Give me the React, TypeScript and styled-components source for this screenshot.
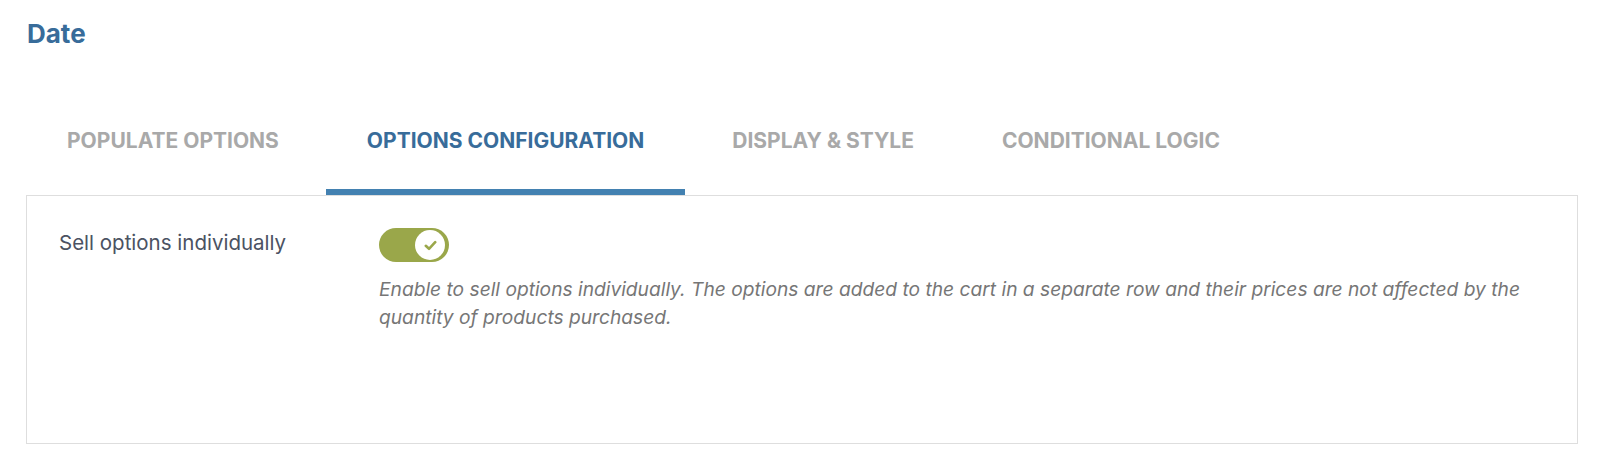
import React, { useState } from "react";
import styled, { createGlobalStyle } from "styled-components";

const GlobalStyle = createGlobalStyle`
  body {
    margin: 0;
    background-color: #ffffff;
    font-family: Inter, "Noto Sans", "Liberation Sans", sans-serif;
  }
`;

const Page = styled.div`
  padding: 18px 22px 0 26px;
`;

const Title = styled.h2`
  margin: 0;
  padding-left: 1px;
  font-size: 26px;
  line-height: 32px;
  font-weight: 700;
  color: #386c9a;
`;

const TabList = styled.div`
  display: flex;
  gap: 6px;
  margin-top: 79px;
`;

const Tab = styled.button<{ active: boolean }>`
  padding: 0 41px 36px;
  border: none;
  border-bottom: 6px solid ${(props) => (props.active ? "#4381b1" : "transparent")};
  background: none;
  font-family: inherit;
  font-size: 21px;
  line-height: 24px;
  font-weight: 700;
  text-transform: uppercase;
  color: ${(props) => (props.active ? "#386c9a" : "#a9a9a9")};
  cursor: pointer;
`;

const Panel = styled.div`
  display: flex;
  height: 249px;
  box-sizing: border-box;
  padding: 32px 32px;
  border: 1px solid #dedede;
`;

const Label = styled.div`
  width: 320px;
  flex-shrink: 0;
  margin-top: 2px;
  font-size: 20.5px;
  line-height: 25px;
  color: #4b5262;
`;

const Field = styled.div`
  flex: 1;
  display: flex;
  flex-direction: column;
  align-items: flex-start;
`;

const Toggle = styled.button<{ on: boolean }>`
  position: relative;
  width: 70px;
  height: 34px;
  padding: 0;
  border: none;
  border-radius: 17px;
  background-color: ${(props) => (props.on ? "#9aa74a" : "#cfcfcf")};
  cursor: pointer;
`;

const Knob = styled.span<{ on: boolean }>`
  position: absolute;
  top: 2px;
  left: ${(props) => (props.on ? "36px" : "2px")};
  width: 30px;
  height: 30px;
  border-radius: 50%;
  background-color: #ffffff;
  display: flex;
  align-items: center;
  justify-content: center;
  transition: left 0.2s ease-in-out;
`;

const Description = styled.p`
  margin: 14px 0 0;
  font-size: 19.2px;
  line-height: 27.5px;
  font-style: italic;
  color: #767676;
`;

const tabs = [
  "Populate options",
  "Options configuration",
  "Display & style",
  "Conditional logic",
];

function App() {
  const [activeTab, setActiveTab] = useState(1);
  const [on, setOn] = useState(true);

  return (
    <>
      <GlobalStyle />
      <Page>
        <Title>Date</Title>
        <TabList>
          {tabs.map((tab, i) => (
            <Tab key={tab} active={i === activeTab} onClick={() => setActiveTab(i)}>
              {tab}
            </Tab>
          ))}
        </TabList>
        <Panel>
          <Label>Sell options individually</Label>
          <Field>
            <Toggle on={on} onClick={() => setOn(!on)}>
              <Knob on={on}>
                {on && (
                  <svg width="13" height="11" viewBox="0 0 13 11">
                    <path
                      d="M1.8 5.8 L5 8.8 L11.2 2.2"
                      fill="none"
                      stroke="#9aa74a"
                      strokeWidth="2.6"
                      strokeLinecap="round"
                      strokeLinejoin="round"
                    />
                  </svg>
                )}
              </Knob>
            </Toggle>
            <Description>
              Enable to sell options individually. The options are added to the
              cart in a separate row and their prices are not affected by the
              quantity of products purchased.
            </Description>
          </Field>
        </Panel>
      </Page>
    </>
  );
}

export default App;
